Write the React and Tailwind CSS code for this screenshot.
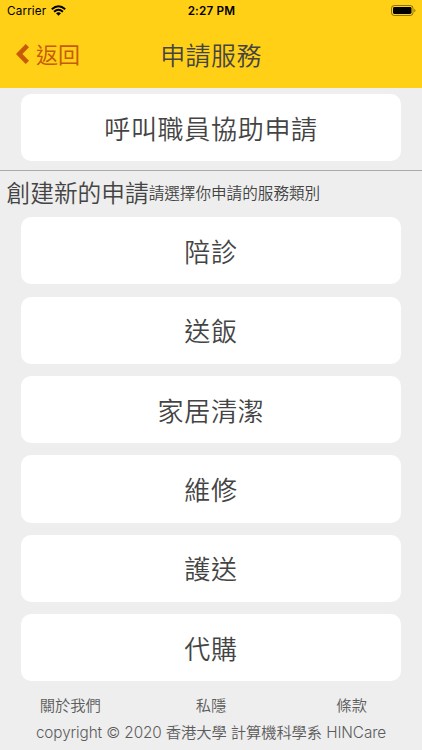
const services = ["陪診", "送飯", "家居清潔", "維修", "護送", "代購"];

function ServiceButton({ children }) {
  return (
    <button className="block h-[67.2px] w-full shrink-0 rounded-[10px] bg-white text-center text-[26px] leading-[64px] font-[350] tracking-[0.7px] text-[#444]">
      {children}
    </button>
  );
}

function StatusBar() {
  return (
    <div className="grid h-[22px] grid-cols-3 items-center pr-[6px] pl-[7px] font-['Inter','Liberation_Sans',sans-serif] text-[11.7px] leading-[22px] text-black">
      <div className="flex items-center gap-[5px]">
        <span className="tracking-[0.15px]">Carrier</span>
        <svg className="mb-px h-[11px] w-[15px]" viewBox="0 0 15 11" fill="none" stroke="currentColor" strokeWidth="2">
          <path d="M.8 4.2Q7.5-1.7 14.2 4.2M3.1 6.7Q7.5 2.9 11.9 6.7" />
          <path d="M5 8.2Q7.5 6.2 10 8.2L7.5 10.8Z" fill="currentColor" stroke="none" />
        </svg>
      </div>
      <span className="text-center font-semibold tracking-[0.2px]">2:27 PM</span>
      <svg className="mb-px h-[11px] w-[25px] justify-self-end" viewBox="0 0 25 11">
        <rect x=".5" y=".5" width="21.5" height="10" rx="2.8" fill="none" stroke="#000" strokeOpacity=".45" />
        <rect x="2" y="2" width="18.5" height="7" rx="1.4" />
        <path d="M23.3 3.7Q25.5 5.5 23.3 7.3Z" fillOpacity=".5" />
      </svg>
    </div>
  );
}

export default function App() {
  return (
    <div className="flex h-[750px] w-[422px] flex-col overflow-hidden bg-[#eee] font-['Noto_Sans_CJK_TC',sans-serif] text-[#444]">
      <header className="h-[88px] shrink-0 bg-[#ffd016]">
        <StatusBar />
        <div className="grid h-[64px] grid-cols-3 items-center">
          <button className="flex items-center gap-[7px] pl-[16px] text-[22px] leading-[62px] text-[#c75b0a]">
            <svg className="h-[20px] w-[13px]" viewBox="0 0 13 20" fill="currentColor">
              <path d="M9.7 0L13 3.3L6.4 10L13 16.7L9.7 20L0 10Z" />
            </svg>
            <span className="h-[64px]">返回</span>
          </button>
          <h1 className="text-center text-[25px] leading-[62px] font-[350] tracking-[0.4px] text-[#444]">申請服務</h1>
        </div>
      </header>
      <div className="h-[83px] shrink-0 border-b border-[#aaa] px-[21.3px] pt-[6px]">
        <ServiceButton>呼叫職員協助申請</ServiceButton>
      </div>
      <div className="flex h-[46.2px] shrink-0 items-start pl-[6.5px] leading-[43px] whitespace-nowrap">
        <h2 className="text-[23.7px] font-[350]">創建新的申請</h2>
        <span className="text-[15.6px] font-[350]">請選擇你申請的服務類別</span>
      </div>
      <main className="flex shrink-0 flex-col gap-[12.2px] px-[21.3px]">
        {services.map((name) => (
          <ServiceButton key={name}>{name}</ServiceButton>
        ))}
      </main>
      <footer className="pt-[11px] text-center font-['Inter','Noto_Sans_CJK_TC',sans-serif] text-[15.3px] leading-[27px] font-[350] text-[#5c5c5c]">
        <nav className="grid grid-cols-3">
          <a>關於我們</a>
          <a>私隱</a>
          <a>條款</a>
        </nav>
        <p className="tracking-[-0.1px] whitespace-nowrap">copyright © 2020 香港大學 計算機科學系 HINCare</p>
      </footer>
    </div>
  );
}
